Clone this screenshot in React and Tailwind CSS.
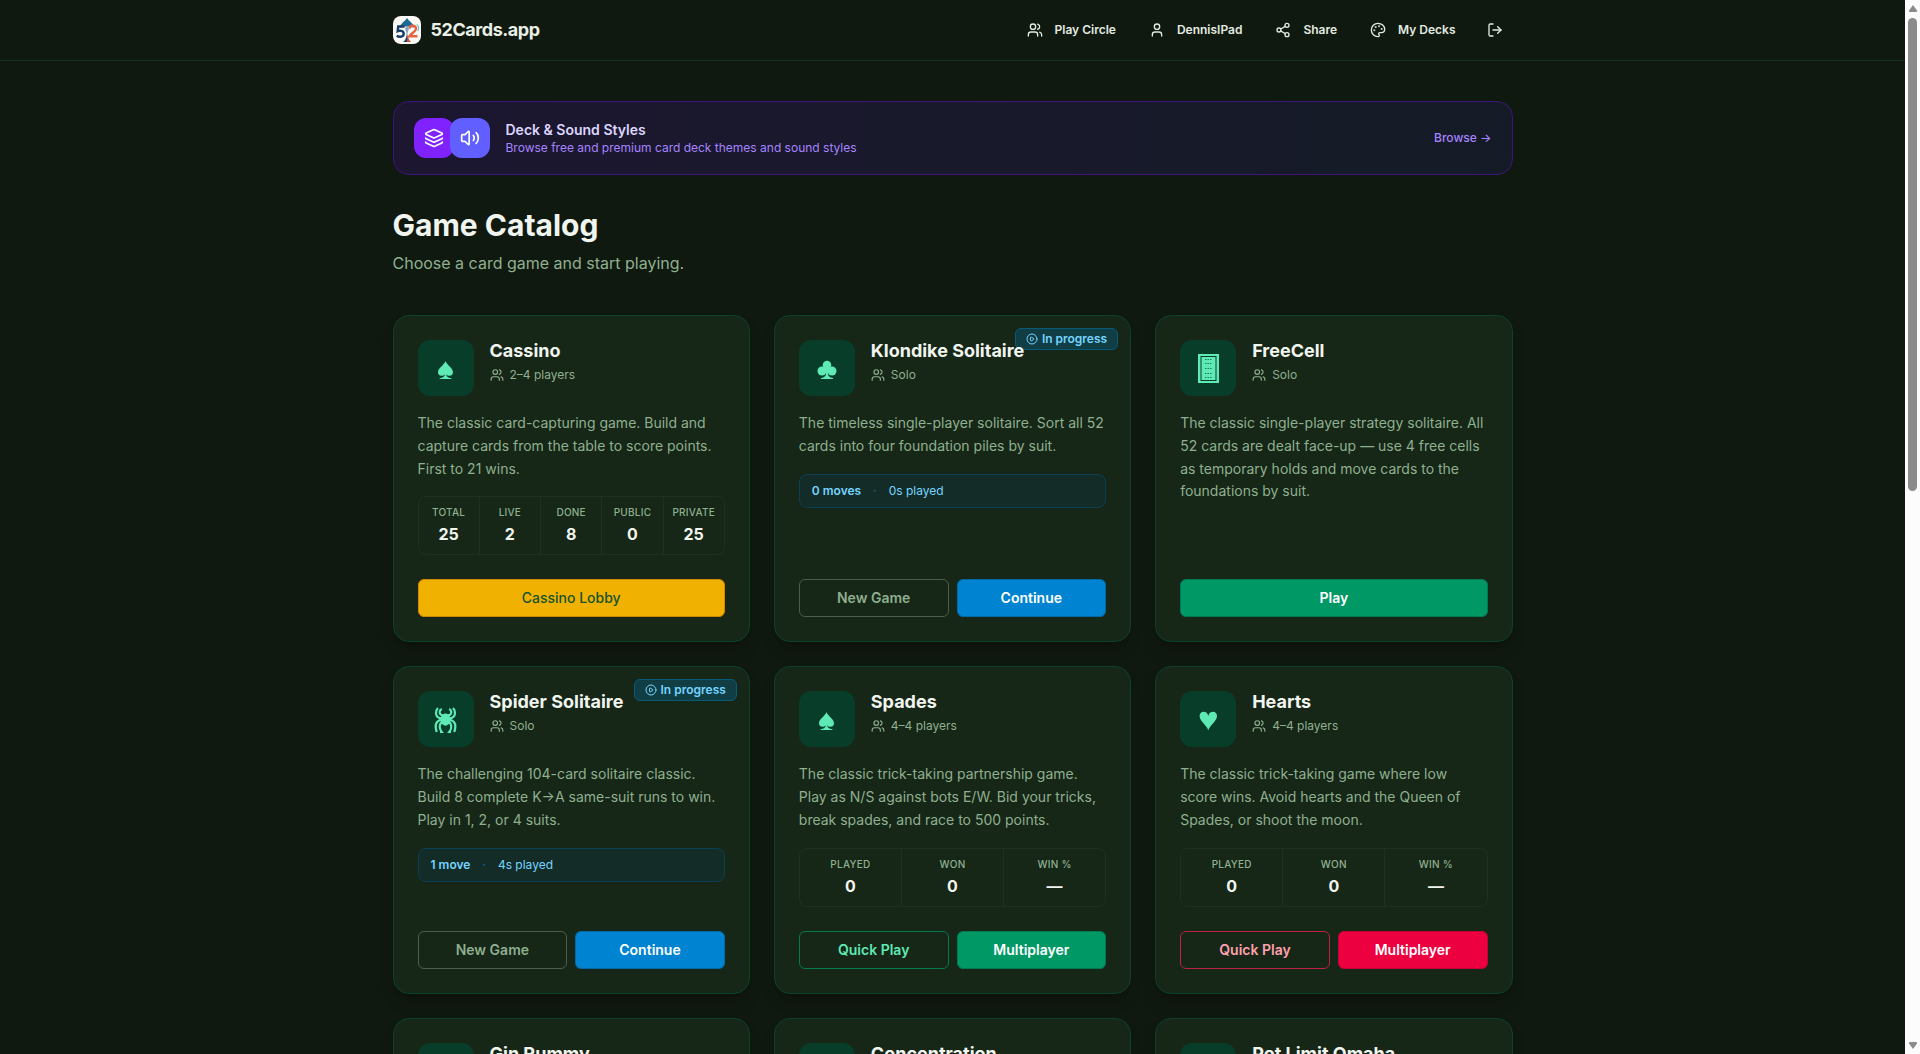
import React from 'react';
import { Users, User, Share2, Palette, LogOut, Layers, Volume2, CirclePlay } from 'lucide-react';

const games = [
  {
    name: 'Cassino',
    icon: 'spade',
    players: '2–4 players',
    description:
      'The classic card-capturing game. Build and capture cards from the table to score points. First to 21 wins.',
    stats: [
      ['Total', '25'],
      ['Live', '2'],
      ['Done', '8'],
      ['Public', '0'],
      ['Private', '25'],
    ],
    actions: [{ label: 'Cassino Lobby', style: 'gold' }],
  },
  {
    name: 'Klondike Solitaire',
    icon: 'club',
    players: 'Solo',
    description: 'The timeless single-player solitaire. Sort all 52 cards into four foundation piles by suit.',
    progress: { moves: '0 moves', time: '0s played' },
    actions: [
      { label: 'New Game', style: 'muted' },
      { label: 'Continue', style: 'sky' },
    ],
  },
  {
    name: 'FreeCell',
    icon: 'cardback',
    players: 'Solo',
    description:
      'The classic single-player strategy solitaire. All 52 cards are dealt face-up — use 4 free cells as temporary holds and move cards to the foundations by suit.',
    actions: [{ label: 'Play', style: 'emerald' }],
  },
  {
    name: 'Spider Solitaire',
    icon: 'spider',
    players: 'Solo',
    description:
      'The challenging 104-card solitaire classic. Build 8 complete K→A same-suit runs to win. Play in 1, 2, or 4 suits.',
    progress: { moves: '1 move', time: '4s played' },
    actions: [
      { label: 'New Game', style: 'muted' },
      { label: 'Continue', style: 'sky' },
    ],
  },
  {
    name: 'Spades',
    icon: 'spade',
    players: '4–4 players',
    description:
      'The classic trick-taking partnership game. Play as N/S against bots E/W. Bid your tricks, break spades, and race to 500 points.',
    stats: [
      ['Played', '0'],
      ['Won', '0'],
      ['Win %', '—'],
    ],
    actions: [
      { label: 'Quick Play', style: 'emeraldOutline' },
      { label: 'Multiplayer', style: 'emerald' },
    ],
  },
  {
    name: 'Hearts',
    icon: 'heart',
    players: '4–4 players',
    description:
      'The classic trick-taking game where low score wins. Avoid hearts and the Queen of Spades, or shoot the moon.',
    stats: [
      ['Played', '0'],
      ['Won', '0'],
      ['Win %', '—'],
    ],
    actions: [
      { label: 'Quick Play', style: 'roseOutline' },
      { label: 'Multiplayer', style: 'rose' },
    ],
  },
  { name: 'Gin Rummy', players: '2 players', actions: [{ label: 'Play', style: 'emerald' }] },
  { name: 'Concentration', players: 'Solo', actions: [{ label: 'Play', style: 'emerald' }] },
  { name: 'Pot Limit Omaha', players: '2–6 players', actions: [{ label: 'Play', style: 'emerald' }] },
];

const buttonStyles = {
  gold: 'bg-[#f0b100] border-[#d08700] text-[#14532d] font-medium',
  muted: 'bg-transparent border-[#4b5f4a] text-[#8fae8f] font-semibold',
  sky: 'bg-[#0084d1] border-[#0069a8] text-white font-semibold',
  emerald: 'bg-[#009966] border-[#007a55] text-white font-semibold',
  emeraldOutline: 'bg-transparent border-[#047a50] text-[#5ee9b5] font-semibold',
  rose: 'bg-[#ec003f] border-[#c70036] text-white font-semibold',
  roseOutline: 'bg-transparent border-[#bd2144] text-[#ffa1ad] font-semibold',
};

const navItems = [
  { label: 'Play Circle', icon: Users },
  { label: 'DennisIPad', icon: User },
  { label: 'Share', icon: Share2 },
  { label: 'My Decks', icon: Palette },
];

function Logo() {
  return (
    <svg viewBox="0 0 28 28" className="w-7 h-7 rounded-lg" aria-hidden="true">
      <rect width="28" height="28" fill="#fbfaf7" />
      <path d="M14 2c-1.500 3-7 5.500-7.500 10 4-2 11-2 15 0C21 7.500 15.500 5 14 2z" fill="#1d6a96" />
      <path d="M14 15c-.2 5-1 9-4 11h8c-2.800-2-3.800-5-4-11z" fill="#1b4468" />
      <path d="M14.800 18c.3 4 1.200 6.500 3.200 8h-4z" fill="#e2553b" />
      <path
        d="M11.500 10.500H5.200l-.5 4.700c1.500-.8 6-.8 6 2.500 0 3.200-4.300 3.800-7 2"
        fill="none"
        stroke="#173f66"
        strokeWidth="2.400"
      />
      <path
        d="M16.500 12.600c.2-4 7-3.800 6.500.2-.4 3-4.400 4.100-6.500 7.400h8"
        fill="none"
        stroke="#e8623f"
        strokeWidth="2.400"
      />
      <path d="M23.500 8.500c2 1.300 2.600 4 1.300 6.500" fill="none" stroke="#6cc3dc" strokeWidth="1.200" />
      <path d="M12 12.500l2-2.500 2 2.500-2 6z" fill="#7ba6c4" />
    </svg>
  );
}

function GameIcon({ name }) {
  return (
    <svg viewBox="0 0 56 56" className="w-14 h-14" fill="currentColor" aria-hidden="true">
      {name === 'spade' && (
        <path d="M27.500 21c1.800 4.600 7.500 7.100 7.500 11.200 0 2.300-1.600 3.600-3.500 3.600-1.300 0-2.500-.5-3.300-1.500.1 2 1.400 3.400 5.200 4v.7H21.600v-.7c3.800-.6 5.100-2 5.200-4-.8 1-2 1.500-3.300 1.500-1.900 0-3.500-1.300-3.500-3.600 0-4.100 5.700-6.600 7.500-11.200z" />
      )}
      {name === 'club' && (
        <>
          <circle cx="28" cy="25" r="4.300" />
          <circle cx="23" cy="31" r="4.500" />
          <circle cx="33" cy="31" r="4.500" />
          <path d="M26.500 27h3l.8 4-1.400 2.500c.2 2.600 1.600 4.200 5.100 4.600v.9H22v-.9c3.500-.4 4.900-2 5.100-4.600L25.700 31z" />
        </>
      )}
      {name === 'heart' && (
        <path d="M28.300 39.200c-1.300-4.600-8.700-9-8.700-14.200 0-2.700 1.700-4.300 3.900-4.300 2.500 0 4.300 1.600 4.800 4.200.5-2.600 2.300-4.200 4.800-4.200 2.200 0 3.900 1.600 3.900 4.300 0 5.200-7.400 9.600-8.700 14.200z" />
      )}
      {name === 'cardback' && (
        <>
          <path fillRule="evenodd" d="M18 14h21v29H18zM20.500 16v25h16V16z" />
          <rect x="21.500" y="17" width="14" height="23" />
          <path
            d="M25 19.500h7M25 23.500h7M25 28.500h7M25 33.500h7M25 37.500h7"
            stroke="#11805c"
            strokeWidth="1"
            strokeDasharray="1.500 1"
          />
        </>
      )}
      {name === 'spider' && (
        <>
          <path d="M27.500 22.500c2.200 0 5.200 2.700 5.200 6s-2.600 5.700-5.200 6.200c-2.600-.5-5.200-2.900-5.200-6.200s3-6 5.200-6z" />
          <path
            d="M25.500 24.500l-2.500-.8c-2-1.200-1.800-4.400.8-5.700M29.500 24.500l2.500-.8c2-1.200 1.800-4.400-.8-5.700M24 27.500c-3.500-.3-5.800-2-6-5-.1-2.400.7-4.300 2-5.500M31 27.500c3.500-.3 5.800-2 6-5 .1-2.400-.7-4.300-2-5.500M23.500 28.500c-6 1.500-7 6-4.800 12.500M31.500 28.500c6 1.500 7 6 4.800 12.500M24.500 30.500c-3.500 2.500-3.800 6.500-.8 10.500H22M30.500 30.500c3.500 2.500 3.800 6.500.8 10.500H33"
            fill="none"
            stroke="currentColor"
            strokeWidth="2.200"
          />
        </>
      )}
    </svg>
  );
}

function Header() {
  return (
    <header className="border-b border-[#17301b]">
      <div className="max-w-6xl mx-auto px-4 h-15 flex items-center justify-between">
        <a href="#" className="flex items-center gap-2.5">
          <Logo />
          <span className="text-lg font-bold tracking-tight text-[#e8efe6]">52Cards.app</span>
        </a>
        <nav className="flex items-center gap-[9px]">
          {navItems.map(({ label, icon: Icon }) => (
            <button key={label} className="flex items-center gap-3 px-3 h-8 text-xs font-semibold text-[#e3ebe1]">
              <Icon className="w-4 h-4" />
              {label}
            </button>
          ))}
          <button className="flex items-center px-2.5 h-8 text-[#e3ebe1]" aria-label="Log out">
            <LogOut className="w-4 h-4" />
          </button>
        </nav>
      </div>
    </header>
  );
}

function StylesBanner() {
  return (
    <a
      href="#"
      className="flex items-center justify-between px-5 py-4 rounded-2xl border border-[#3f127f] bg-linear-to-r from-[#1c1630] to-[#141b26]"
    >
      <div className="flex items-center gap-4">
        <div className="flex -space-x-1">
          <div className="w-10 h-10 rounded-xl bg-[#7f22fe] text-white flex items-center justify-center">
            <Layers className="w-5 h-5" />
          </div>
          <div className="w-10 h-10 rounded-xl bg-[#615fff] text-white flex items-center justify-center">
            <Volume2 className="w-5 h-5" />
          </div>
        </div>
        <div>
          <p className="text-sm font-semibold text-[#ddd6ff]">Deck &amp; Sound Styles</p>
          <p className="text-xs text-[#a684ff]">Browse free and premium card deck themes and sound styles</p>
        </div>
      </div>
      <span className="text-xs font-medium text-[#a684ff]">Browse →</span>
    </a>
  );
}

function GameCard({ game }) {
  return (
    <article className="relative flex flex-col p-6 rounded-2xl border border-[#0d4229] bg-[#162617] shadow-lg shadow-black/20">
      {game.progress && (
        <span className="absolute top-3 right-3 flex items-center gap-1 px-2.5 py-0.5 rounded-md border border-[#085a7b] bg-[#113e45] text-xs font-semibold text-[#74d4ff]">
          <CirclePlay className="w-3 h-3" />
          In progress
        </span>
      )}
      <div className="relative flex items-start gap-4 mb-4">
        <div className="w-14 h-14 shrink-0 rounded-xl bg-[#083d2a] text-[#5ee9b5]">
          <GameIcon name={game.icon} />
        </div>
        <div>
          <h2 className="text-lg leading-tight font-bold text-[#f1f5ef]">{game.name}</h2>
          <p className="mt-1 flex items-center gap-1.5 text-xs text-[#8fb08f]">
            <Users className="w-3.5 h-3.5" />
            {game.players}
          </p>
        </div>
      </div>
      <p className="text-sm leading-relaxed text-[#8fb08f] mb-4">{game.description}</p>

      {game.stats && (
        <dl className="flex rounded-lg border border-[#1c321e] divide-x divide-[#1c321e] mb-6">
          {game.stats.map(([label, value]) => (
            <div key={label} className="flex-1 basis-0 py-2 text-center">
              <dt className="text-[10px] leading-[15px] font-medium uppercase tracking-wide text-[#8fb08f]">{label}</dt>
              <dd className="mt-0.5 text-base font-bold text-[#f1f5ef]">{value}</dd>
            </div>
          ))}
        </dl>
      )}

      {game.progress && (
        <div className="flex items-center gap-3 px-3 py-2 mb-6 rounded-lg border border-[#0b3f55] bg-[#142c27] text-xs text-[#74d4ff]">
          <span className="font-semibold">{game.progress.moves}</span>
          <span className="text-[#0b76ad]">·</span>
          <span>{game.progress.time}</span>
        </div>
      )}

      <div className="mt-auto flex gap-2">
        {game.actions.map((action) => (
          <button
            key={action.label}
            className={`flex-1 py-2 rounded-md border text-sm ${buttonStyles[action.style]}`}
          >
            {action.label}
          </button>
        ))}
      </div>
    </article>
  );
}

function Scrollbar() {
  return (
    <div className="w-[15px] shrink-0 flex flex-col items-center justify-between py-1 bg-[#fcfcfc]" aria-hidden="true">
      <svg viewBox="0 0 10 8" className="w-[10px] h-2" fill="#8b8b8b">
        <path d="M5 1l4 5.500q.3 1.500-1 1.500H2q-1.300 0-1-1.500z" />
      </svg>
      <div className="flex-1 w-full py-1.5 flex justify-center">
        <div className="w-[9px] h-[46.5%] rounded-full bg-[#8b8b8b]" />
      </div>
      <svg viewBox="0 0 10 8" className="w-[10px] h-2" fill="#8b8b8b">
        <path d="M5 7L1 1.500Q.7 0 2 0h6q1.300 0 1 1.500z" />
      </svg>
    </div>
  );
}

export default function App() {
  return (
    <div className="h-screen flex overflow-hidden bg-[#10190f] font-['Inter',sans-serif]">
      <div className="flex-1 overflow-hidden">
        <Header />
        <main className="max-w-6xl mx-auto px-4 py-10">
          <StylesBanner />
          <div className="mt-8 mb-10">
            <h1 className="text-3xl font-bold text-[#f1f5ef]">Game Catalog</h1>
            <p className="mt-2 text-base text-[#8fb08f]">Choose a card game and start playing.</p>
          </div>
          <div className="grid grid-cols-3 gap-6">
            {games.map((game) => (
              <GameCard key={game.name} game={game} />
            ))}
          </div>
        </main>
      </div>
      <Scrollbar />
    </div>
  );
}
